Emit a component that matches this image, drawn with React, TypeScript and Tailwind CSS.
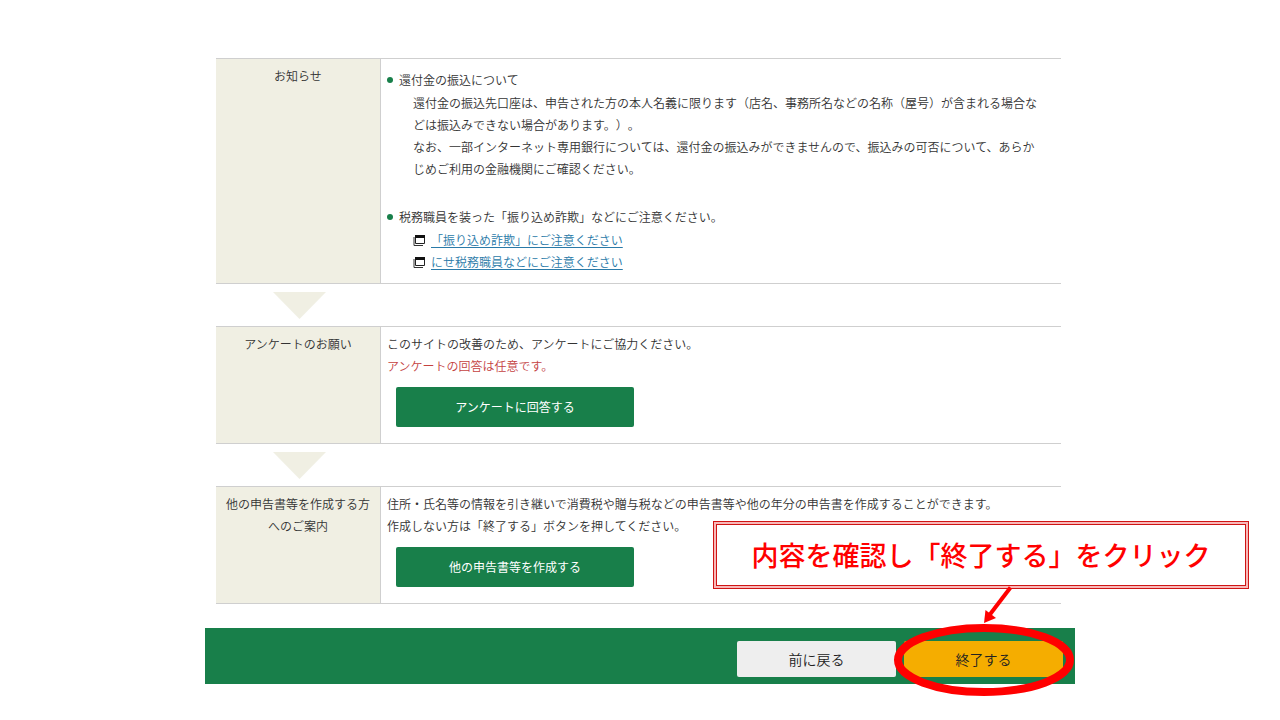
import { ReactNode } from "react";

type StepProps = {
  title: string;
  children: ReactNode;
};

type LinkProps = {
  label: string;
};

const Step = ({ title, children }: StepProps) => {
  return (
    <section className="flex border-y border-[#cfcfcf]">
      <h2 className="w-[165px] shrink-0 border-r border-[#cfcfcf] bg-[#f0efe3] px-1.5 pt-1.5 text-center">
        {title}
      </h2>
      <div className="min-w-0 flex-1 pt-1.5 pl-1.5">{children}</div>
    </section>
  );
};

const StepArrow = () => {
  return (
    <div className="flex h-[42px] w-[167px] justify-center pt-2">
      <svg width="53" height="27" viewBox="0 0 53 27" aria-hidden="true">
        <path d="M0 0H53L26.5 27Z" fill="#f0efe3" />
      </svg>
    </div>
  );
};

const Bullet = () => {
  return <span className="mr-1.5 size-1.5 shrink-0 rounded-full bg-[#187f4a]" />;
};

const WindowLink = ({ label }: LinkProps) => {
  return (
    <li className="flex items-center gap-1.5">
      <svg width="12" height="11" viewBox="0 0 12 11" aria-hidden="true">
        <path d="M1 2V10.5H10" fill="none" stroke="#333" />
        <path d="M2.5 0.5H11.5V8.5H2.5Z" fill="#fff" stroke="#222" />
        <path d="M2 0H12V3H2Z" fill="#111" />
      </svg>
      <a href="#" className="text-[#2a7aa8] underline underline-offset-2">
        {label}
      </a>
    </li>
  );
};

const GreenButton = ({ label }: LinkProps) => {
  return (
    <button
      type="button"
      className="mt-2.5 mb-4 ml-[9px] block h-10 w-[238px] rounded-xs bg-[#187f4a] font-normal text-white"
    >
      {label}
    </button>
  );
};

const App = () => {
  return (
    <div className="min-h-screen overflow-x-hidden bg-white pt-[58px] pb-9 font-['Noto_Sans_CJK_JP',sans-serif] text-xs leading-[22px] font-[350] text-[#333] [text-spacing-trim:space-all]">
      <main className="mx-auto max-w-[870px]">
        <div className="pr-3.5 pl-[11px]">
          <Step title="お知らせ">
            <ul className="pt-1 pb-2.5">
              <li>
                <h3 className="flex items-center">
                  <Bullet />
                  還付金の振込について
                </h3>
                <div className="mt-px pr-4 pl-[26px]">
                  <p>
                    還付金の振込先口座は、申告された方の本人名義に限ります（店名、事務所名などの名称（屋号）が含まれる場合などは振込みできない場合があります。）。
                  </p>
                  <p>
                    なお、一部インターネット専用銀行については、還付金の振込みができませんので、振込みの可否について、あらかじめご利用の金融機関にご確認ください。
                  </p>
                </div>
              </li>
              <li className="mt-[26px]">
                <h3 className="flex items-center">
                  <Bullet />
                  税務職員を装った「振り込め詐欺」などにご注意ください。
                </h3>
                <ul className="mt-px pl-[26px]">
                  <WindowLink label="「振り込め詐欺」にご注意ください" />
                  <WindowLink label="にせ税務職員などにご注意ください" />
                </ul>
              </li>
            </ul>
          </Step>

          <StepArrow />

          <Step title="アンケートのお願い">
            <p>このサイトの改善のため、アンケートにご協力ください。</p>
            <p className="text-[#c4423f]">アンケートの回答は任意です。</p>
            <GreenButton label="アンケートに回答する" />
          </Step>

          <StepArrow />

          <Step title="他の申告書等を作成する方へのご案内">
            <p>住所・氏名等の情報を引き継いで消費税や贈与税などの申告書等や他の年分の申告書を作成することができます。</p>
            <p>作成しない方は「終了する」ボタンを押してください。</p>
            <GreenButton label="他の申告書等を作成する" />
          </Step>
        </div>

        <div className="relative mt-6 flex h-14 items-center justify-end gap-2 bg-[#187f4a] pt-1.5 pr-3 text-sm text-[#222]">
          <button type="button" className="h-9 w-[159px] rounded-xs bg-[#eeeeee]">
            前に戻る
          </button>
          <button type="button" className="h-9 w-[159px] rounded-xs bg-[#f5ad00]">
            終了する
          </button>

          {/* 操作説明の吹き出し */}
          <div className="absolute right-[-174px] bottom-[95px] w-[536px] border border-[#cf1515] bg-[#f8b8b8] p-0.5">
            <p className="border border-[#cf1515] bg-white py-3 text-center text-[27px] leading-9 font-medium text-[#ff0000]">
              内容を確認し「終了する」をクリック
            </p>
          </div>
          <svg
            className="pointer-events-none absolute -top-12 -right-[5px]"
            width="190"
            height="120"
            viewBox="0 0 190 120"
            aria-hidden="true"
          >
            <path d="M120.5 7.5L99.5 35" stroke="#ff0000" strokeWidth="4" />
            <path d="M94 43L95.5 30L106 38Z" fill="#ff0000" />
            <ellipse cx="94" cy="80" rx="86" ry="32" fill="none" stroke="#ff0000" strokeWidth="8" />
          </svg>
        </div>
      </main>
    </div>
  );
};

export default App;
